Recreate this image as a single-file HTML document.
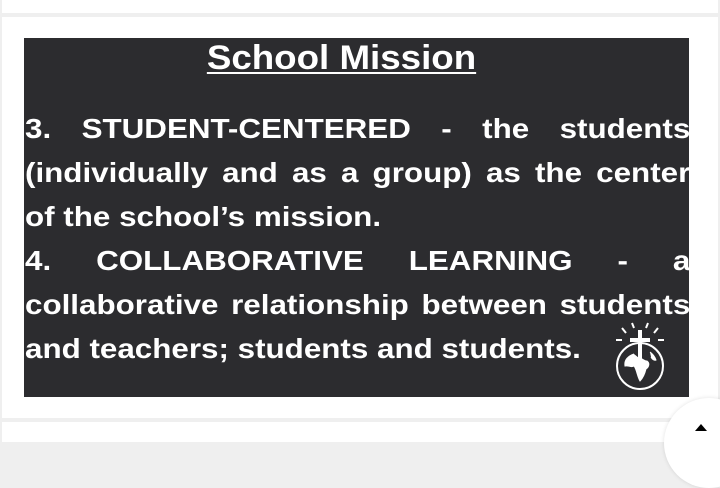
<!DOCTYPE html>
<html><head><style>
html,body{margin:0;padding:0;width:720px;height:431px;overflow:hidden;background:#efefef;font-family:"Liberation Sans",sans-serif}
.card1{position:absolute;left:2px;top:0;width:716px;height:13px;background:#fff}
.card2{position:absolute;left:2px;top:17px;width:716px;height:401px;background:#fff}
.card3{position:absolute;left:2px;top:422px;width:716px;height:20px;background:#fff}
.box{position:absolute;left:24px;top:38px;width:665px;height:359px;background:#2c2c2f}
.title{position:absolute;left:0;width:683px;top:38px;text-align:center;font-weight:bold;font-size:34px;line-height:40px;color:#fff;text-decoration:underline;text-decoration-thickness:2px;text-underline-offset:3px;transform:scaleX(1.08);transform-origin:341.5px 0}
.t{position:absolute;left:25px;width:594px;font-weight:bold;font-size:28px;line-height:44px;white-space:nowrap;color:#fff;transform:scaleX(1.12);transform-origin:0 0}
.j{text-align:justify;text-align-last:justify;white-space:normal}
.circ{position:absolute;left:664px;top:398px;width:90px;height:90px;border-radius:50%;background:#fff;box-shadow:0 0 4px rgba(0,0,0,.12)}
</style></head><body>
<div class="card1"></div><div class="card2"></div><div class="card3"></div>
<div class="box"></div>
<div class="title">School Mission</div>
<div class="t j" style="top:107px">3. STUDENT-CENTERED - the students</div>
<div class="t j" style="top:151px">(individually and as a group) as the center</div>
<div class="t" style="top:195px">of the school’s mission.</div>
<div class="t j" style="top:239px">4. COLLABORATIVE LEARNING - a</div>
<div class="t j" style="top:283px">collaborative relationship between students</div>
<div class="t" style="top:327px">and teachers; students and students.</div>
<svg style="position:absolute;left:612px;top:320px" width="56" height="72" viewBox="0 0 56 72" fill="none" stroke="#fff" stroke-width="2">
<circle cx="28" cy="46" r="23"/>
<path d="M28 10v38M18 20h20" stroke-width="4"/>
<path d="M4 20h6M46 20h6M10 8l4 5M46 8l-4 5M20 3l2 5M36 3l-2 5" stroke-width="2"/>
<path d="M22 34c-6 2-10 6-9 12 4-1 6 2 9 0 3 4 3 10 6 15 3-3 5-8 6-12 3-2 4-6 1-8-3 0-5-3-8-3M38 32c3 2 5 5 6 8-2 1-4-1-5-3" fill="#fff" stroke-width="1"/>
</svg>
<div class="circ"></div>
<div style="position:absolute;left:695px;top:424px;width:0;height:0;border-left:6px solid transparent;border-right:6px solid transparent;border-bottom:7px solid #000"></div>
</body></html>
